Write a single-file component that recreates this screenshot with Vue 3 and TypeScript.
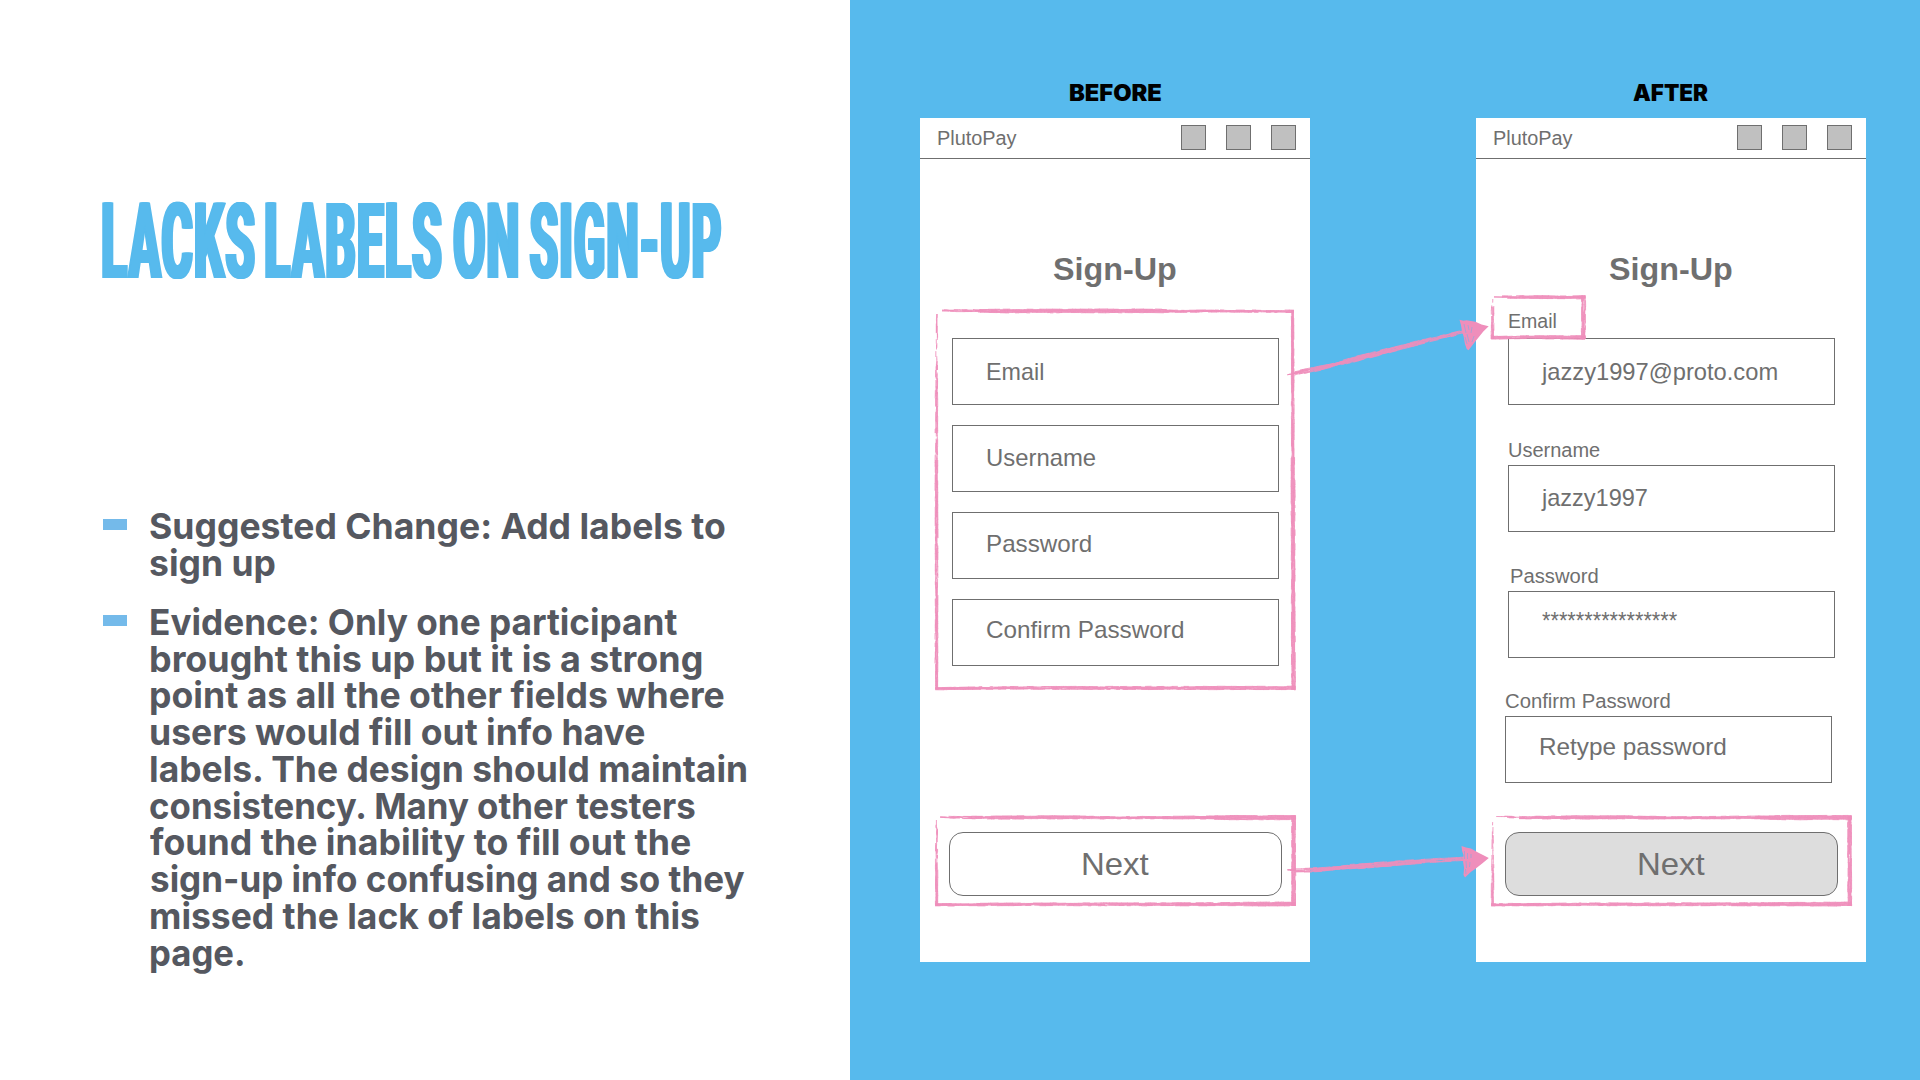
<script setup lang="ts">
import type { Directive } from 'vue'

interface Line { text: string; w: number; x?: number }
interface Field { text: string; w: number; top: number; x?: number; label?: string; labelW?: number; labelX?: number; gap?: number; shift?: number }
interface Stop { x: number; y: number; w: number; d: number }

/* Condenses or widens a run of text so that its visible ink spans exactly `w` pixels. */
const vFit: Directive<HTMLElement, number> = {
  mounted(el, { value }) {
    const ctx = document.createElement('canvas').getContext('2d')
    if (!ctx) return
    const cs = getComputedStyle(el)
    ctx.font = `${cs.fontWeight} ${cs.fontSize} ${cs.fontFamily}`
    if (cs.letterSpacing !== 'normal') ctx.letterSpacing = cs.letterSpacing
    const m = ctx.measureText(el.textContent ?? '')
    const advance = el.offsetWidth
    const k = advance / m.width
    const inkLeft = -m.actualBoundingBoxLeft * k
    const ink = (m.actualBoundingBoxLeft + m.actualBoundingBoxRight) * k
    const scale = value / ink
    el.style.transform = `translateX(${-inkLeft * scale}px) scaleX(${scale})`
    el.style.marginRight = `${value - advance}px`
  },
}

const title: Line[] = [
  { text: 'LACKS', w: 149.5 },
  { text: 'LABELS', w: 173 },
  { text: 'ON', w: 61.5 },
  { text: 'SIGN-UP', w: 189 },
]

const bullets: Line[][] = [
  [
    { text: 'Suggested Change: Add labels to', w: 575, x: -1 },
    { text: 'sign up', w: 125.5, x: -1 },
  ],
  [
    { text: 'Evidence: Only one participant', w: 526.5 },
    { text: 'brought this up but it is a strong', w: 550.5 },
    { text: 'point as all the other fields where', w: 573.5 },
    { text: 'users would fill out info have', w: 494 },
    { text: 'labels. The design should maintain', w: 596 },
    { text: 'consistency. Many other testers', w: 544.5, x: -1 },
    { text: 'found the inability to fill out the', w: 541, x: -1 },
    { text: 'sign-up info confusing and so they', w: 593.5 },
    { text: 'missed the lack of labels on this', w: 547.5 },
    { text: 'page.', w: 92.5 },
  ],
]

const before: Field[] = [
  { text: 'Email', w: 56, top: 19 },
  { text: 'Username', w: 109, top: 18 },
  { text: 'Password', w: 103.5, top: 17 },
  { text: 'Confirm Password', w: 196, top: 16 },
]

const after: Field[] = [
  { label: 'Email', labelW: 47.5, labelX: 0.6, gap: 5, text: 'jazzy1997@proto.com', w: 236, top: 19, x: -2 },
  { label: 'Username', labelW: 90.8, labelX: 1, gap: 3, text: 'jazzy1997', w: 106.5, top: 18, x: -2 },
  { label: 'Password', labelW: 86.7, labelX: 2.5, gap: 3, text: '****************', w: 134.5, top: 15, x: -1 },
  { label: 'Confirm Password', labelW: 163.2, labelX: 1, gap: 3, text: 'Retype password', w: 185, top: 16, shift: -3 },
]

/* Chalk strokes: many thin bristles following a line of stops (position, width, coverage). */
let seed = 11
function rnd(): number {
  seed = (seed * 16807) % 2147483647
  return seed / 2147483647
}

function chalk(stops: Stop[]): string {
  let out = ''
  for (let i = 0; i < stops.length - 1; i++) {
    const a = stops[i]
    const b = stops[i + 1]
    const len = Math.hypot(b.x - a.x, b.y - a.y)
    const ux = (b.x - a.x) / len
    const uy = (b.y - a.y) / len
    const lanes = Math.max(4, Math.ceil(Math.max(a.w, b.w) / 0.5))
    for (let l = 0; l < lanes; l++) {
      let s = 0
      while (s < len) {
        const step = Math.min(2 + rnd() * 7, len - s)
        const t = s / len
        const w = a.w + (b.w - a.w) * t
        const d = a.d + (b.d - a.d) * t
        const edge = l === 0 || l === lanes - 1
        if (rnd() < (edge ? d * 0.7 : d)) {
          const o = (l / (lanes - 1) - 0.5) * (w - 0.6) + (rnd() - 0.5) * 0.3
          const e = o + (rnd() - 0.5) * 0.3
          const q = Math.min(len, s + step + 0.6)
          out += `M${(a.x + ux * s - uy * o).toFixed(2)} ${(a.y + uy * s + ux * o).toFixed(2)}L${(a.x + ux * q - uy * e).toFixed(2)} ${(a.y + uy * q + ux * e).toFixed(2)}`
        }
        s += step + 0.01
      }
    }
  }
  return out
}

function p(x: number, y: number, w: number, d: number): Stop {
  return { x, y, w, d }
}

function buttonFrame(x: number): string {
  return (
    chalk([p(x + 5, 817, 2, 0.4), p(x + 28, 817.5, 3, 0.8), p(x + 60, 817.5, 3.6, 0.97), p(x + 134, 817.3, 3.6, 1), p(x + 175, 817.8, 2.6, 0.97), p(x + 260, 817.5, 3.2, 0.97), p(x + 290, 817.6, 4.6, 0.97), p(x + 360.5, 817.6, 4.8, 1)]) +
    chalk([p(x + 358.4, 815.5, 4.4, 1), p(x + 358.4, 906, 4.4, 0.95)]) +
    chalk([p(x, 904.8, 2.8, 1), p(x + 90, 904.3, 3.2, 0.95), p(x + 240, 904.3, 3.4, 0.97), p(x + 360.5, 904, 4.4, 1)]) +
    chalk([p(x + 1.6, 820, 2, 0.35), p(x + 1.4, 855, 2.6, 0.65), p(x + 1.4, 906, 3, 1)])
  )
}

const marks: string[] = [
  chalk([p(942, 310.5, 2, 0.4), p(975, 310.8, 3, 0.75), p(1000, 311, 4.2, 0.97), p(1155, 310.8, 4, 1), p(1175, 311.3, 2.6, 0.97), p(1220, 311, 2.4, 0.97), p(1294, 311.4, 3, 1)]) +
    chalk([p(1292.6, 310, 2.8, 1), p(1292.8, 440, 3.2, 0.9), p(1293, 480, 4.4, 0.98), p(1293.2, 570, 4, 0.96), p(1293.4, 689.8, 4.4, 0.96)]) +
    chalk([p(935.3, 688.6, 2.6, 1), p(1010, 687.8, 3.2, 0.93), p(1120, 688, 3.4, 0.97), p(1295.5, 688, 4, 1)]) +
    chalk([p(937, 314, 1.6, 0.3), p(936.6, 370, 2.6, 0.55), p(936.4, 460, 3, 0.9), p(936.6, 560, 3.2, 0.85), p(936.4, 689.5, 3, 0.92)]),
  buttonFrame(935.2),
  buttonFrame(1491.2),
  chalk([p(1494, 296.6, 2, 0.4), p(1508, 297, 3, 0.85), p(1534, 297, 3.4, 1), p(1560, 297.4, 3.2, 0.95), p(1585.6, 297.2, 3.8, 1)]) +
    chalk([p(1583.5, 295.5, 4.4, 0.94), p(1583.5, 339.3, 4.4, 0.94)]) +
    chalk([p(1491.2, 337.8, 3.2, 1), p(1520, 337.2, 3.4, 0.95), p(1585.6, 337.4, 4, 1)]) +
    chalk([p(1492.6, 299, 2.6, 0.5), p(1492.6, 316, 3.2, 0.7), p(1492.6, 339, 3.4, 0.95)]),
  chalk([p(1287.5, 374.5, 1.2, 0.4), p(1295, 373.3, 4.4, 0.8), p(1314, 369.3, 5.2, 1), p(1335, 364.5, 3.4, 1), p(1350, 360.5, 5.6, 0.94), p(1403, 346.8, 5, 0.94), p(1425, 341, 4, 0.88), p(1466, 331.2, 3.8, 0.8)]),
  chalk([p(1287.5, 869.8, 1.2, 0.4), p(1296, 869.9, 4.6, 0.8), p(1314, 869.8, 4.8, 1), p(1335, 868.2, 3.4, 1), p(1350, 867, 5.4, 0.94), p(1405, 862.6, 5, 0.94), p(1425, 861, 4, 0.88), p(1466, 858.8, 3.8, 0.8)]),
]
</script>

<template>
  <main class="slide">
    <section class="notes">
      <h1 class="title"><span v-for="t in title" :key="t.text" v-fit="t.w" class="fit">{{ t.text }}</span></h1>
      <ul class="bullets">
        <li v-for="(b, i) in bullets" :key="i">
          <i class="dash"></i>
          <p><span v-for="l in b" :key="l.text" class="row" :style="{ marginLeft: (l.x ?? 0) + 'px' }"><span v-fit="l.w" class="fit">{{ l.text }}</span></span></p>
        </li>
      </ul>
    </section>

    <section class="board">
      <div class="col">
        <h2 class="cap"><span v-fit="91" class="fit">BEFORE</span></h2>
        <div class="phone">
          <header><span v-fit="78.5" class="fit">PlutoPay</span><nav><i></i><i></i><i></i></nav></header>
          <h3><span v-fit="123.5" class="fit">Sign-Up</span></h3>
          <form class="form plain">
            <div v-for="f in before" :key="f.text" class="field" :style="{ paddingTop: f.top + 'px' }"><span v-fit="f.w" class="fit">{{ f.text }}</span></div>
          </form>
          <div class="next"><span v-fit="66" class="fit">Next</span></div>
        </div>
      </div>
      <div class="col">
        <h2 class="cap after"><span v-fit="75" class="fit">AFTER</span></h2>
        <div class="phone">
          <header><span v-fit="78.5" class="fit">PlutoPay</span><nav><i></i><i></i><i></i></nav></header>
          <h3><span v-fit="123.5" class="fit">Sign-Up</span></h3>
          <form class="form labelled">
            <div v-for="f in after" :key="f.text" class="group" :style="{ marginLeft: (f.shift ?? 0) + 'px' }">
              <label :style="{ paddingLeft: f.labelX + 'px', marginBottom: f.gap + 'px' }"><span v-fit="f.labelW ?? 0" class="fit">{{ f.label }}</span></label>
              <div class="field" :style="{ paddingTop: f.top + 'px', textIndent: (f.x ?? 0) + 'px' }"><span v-fit="f.w" class="fit">{{ f.text }}</span></div>
            </div>
          </form>
          <div class="next filled"><span v-fit="66" class="fit">Next</span></div>
        </div>
      </div>

      <svg class="marks" viewBox="850 0 1070 1080" width="1070" height="1080" fill="none">
        <path v-for="(d, i) in marks" :key="i" :d="d" stroke="#ef8ebb" stroke-width=".85" />
        <g fill="#ef8ebb">
          <path d="M1459.5 319.8l4 1 3-.6 9 1.6 6 2.6 7.2 1.8-5.400 5.400-5.600 7-3.800 4.600-5.400 7-1.800-1.200-1.800-5.200-1.200-7-1.800-6-1-6z" />
          <path d="M1461.500 846l4.500 1.500 5 1 7 4 5 2.500 5.800 3-6 5-7 5.500-5 3.500-5.800 5.500-1.500-2.500.6-7-1-6 .4-7-1.400-4z" />
        </g>
        <g stroke="#57baed" stroke-width=".6" opacity=".75">
          <path d="M1464 324l2 9M1468 325l1 5M1467 334l2 8M1472 327l-1 6M1474 336l-2 6M1465 337l2 7" />
          <path d="M1464.500 851v8M1467.500 853v6M1466 861l.5 7M1470 862l-.5 5M1471 854v4M1465.500 869l.5 5" />
        </g>
      </svg>
    </section>
  </main>
</template>

<style>
body {
  margin: 0;
  background: #fff;
}
</style>

<style scoped>
.slide {
  display: flex;
  width: 1920px;
  height: 1080px;
  overflow: hidden;
  background: #fff;
}
.fit {
  display: inline-block;
  text-indent: 0;
  white-space: nowrap;
  transform-origin: 0 50%;
}
.notes {
  box-sizing: border-box;
  width: 850px;
  padding: 183px 0 0 101.500px;
}
.title {
  display: flex;
  gap: 14.500px;
  height: 118px;
  margin: 0;
  padding-left: 2px;
  font: 800 105px/120px Roboto, sans-serif;
  letter-spacing: 3px;
  color: #57baed;
  text-shadow: 2px 0 currentColor, -2px 0 currentColor, 4px 0 currentColor, -4px 0 currentColor;
}
.bullets {
  display: flex;
  flex-direction: column;
  gap: 22.250px;
  margin: 207px 0 0;
  padding: 0;
  list-style: none;
  font: 700 36px/36.750px Inter, sans-serif;
  color: #555860;
}
.bullets li {
  display: flex;
}
.dash {
  width: 24px;
  height: 11px;
  margin: 11px 24px 0 1px;
  background: #74baea;
}
.bullets p {
  margin: 0;
}
.row {
  display: block;
  height: 36.750px;
}
.board {
  position: relative;
  box-sizing: border-box;
  display: flex;
  gap: 166px;
  width: 1070px;
  padding: 78px 0 0 70px;
  background: #57baed;
}
.col {
  width: 390px;
}
.cap {
  display: flex;
  justify-content: center;
  height: 40px;
  margin: 0;
  font: 900 22.700px/30px Inter, sans-serif;
  color: #000;
}
.cap.after {
  padding-right: 1.600px;
}
.phone {
  box-sizing: border-box;
  display: flex;
  flex-direction: column;
  height: 844px;
  background: #fff;
  font-family: "Liberation Sans", Arial, sans-serif;
  color: #6f6f6f;
}
.phone header {
  box-sizing: border-box;
  display: flex;
  justify-content: space-between;
  height: 41px;
  padding: 7px 14px 0 18.300px;
  border-bottom: 1px solid #6f6f6f;
  font-size: 20px;
  line-height: 27px;
}
nav {
  display: flex;
  gap: 20px;
}
nav i {
  box-sizing: border-box;
  width: 25px;
  height: 25px;
  background: #c0c0c0;
  border: 1px solid #6f6f6f;
}
.phone h3 {
  display: flex;
  justify-content: center;
  height: 36px;
  margin: 92px 0 0;
  padding-right: 1.500px;
  font: 700 32px/36px "Liberation Sans", Arial, sans-serif;
}
.form {
  display: flex;
  flex-direction: column;
}
.plain {
  gap: 20px;
  margin: 51px 0 0 32px;
}
.labelled {
  margin: 22px 0 0 32px;
}
.group + .group {
  margin-top: 33px;
}
.group:nth-child(3) {
  margin-top: 32px;
}
.group:nth-child(4) {
  margin-top: 31px;
}
label {
  display: block;
  height: 24px;
  font-size: 20px;
  line-height: 24px;
}
.field {
  box-sizing: border-box;
  width: 327px;
  height: 67px;
  padding-left: 34.300px;
  border: 1px solid #6f6f6f;
  font-size: 24px;
  line-height: 28px;
}
.next {
  box-sizing: border-box;
  display: flex;
  justify-content: center;
  width: 333px;
  height: 64px;
  margin: auto 0 66px 29px;
  padding-top: 12px;
  border: 1px solid #6f6f6f;
  border-radius: 14px;
  font-size: 32px;
  line-height: 38px;
}
.filled {
  background: #ddd;
}
.marks {
  position: absolute;
  top: 0;
  left: 0;
}
</style>
